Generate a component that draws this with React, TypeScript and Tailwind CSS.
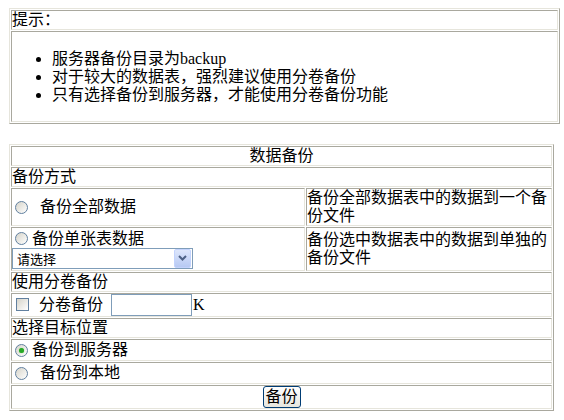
import React from 'react';

const outer =
  'border-separate border-spacing-[1px] border border-t-[#e6e5dc] border-l-[#e6e5dc] border-r-[#a9a89e] border-b-[#a9a89e]';
const cell =
  'p-0 border border-t-[#a9a89e] border-l-[#a9a89e] border-r-[#e6e5dc] border-b-[#e6e5dc]';

function Radio({ checked }: { checked?: boolean }) {
  return (
    <span className="relative inline-block align-middle w-[13px] h-[13px] ml-[3px] mr-[4px] -mt-[2px] rounded-full border border-[#61809f] bg-gradient-to-br from-[#d6d4ca] to-white">
      {checked && (
        <span className="absolute left-[3px] top-[3px] w-[5px] h-[5px] rounded-full bg-[#27a827] shadow-[0_0_1px_#5fd05f]" />
      )}
    </span>
  );
}

function Checkbox() {
  return (
    <span className="inline-block align-middle w-[13px] h-[13px] ml-[4px] mr-[4px] -mt-[2px] border border-[#61809f] bg-gradient-to-br from-[#d6d4ca] to-white" />
  );
}

function SelectBox() {
  return (
    <div className="flex items-center w-[181px] h-[21px] border border-[#7f9db9] bg-white">
      <span className="flex-1 pl-[4px] text-[13px] leading-[19px] font-['Noto_Sans_CJK_SC',sans-serif]">请选择</span>
      <span className="flex items-center justify-center w-[17px] h-[19px] mr-px rounded-[2px] border border-[#c3d3fd] bg-gradient-to-b from-[#dde6fb] to-[#b7c9f3]">
        <svg width="9" height="6" viewBox="0 0 9 6">
          <path d="M1 1 L4.5 4.5 L8 1" fill="none" stroke="#4d6185" strokeWidth="2" />
        </svg>
      </span>
    </div>
  );
}

export default function App() {
  return (
    <div className="min-h-[420px] bg-white pt-[8px] pl-[9px] text-black text-[16px] leading-[18px] font-['Liberation_Serif','Noto_Sans_CJK_SC',serif]">
      <table className={`w-[551px] ${outer}`}>
        <tbody>
          <tr>
            <td className={`${cell} h-[20px]`}>提示：</td>
          </tr>
          <tr>
            <td className={`${cell} h-[91px]`}>
              <ul className="list-disc pl-10 my-[17px]">
                <li>服务器备份目录为backup</li>
                <li>对于较大的数据表，强烈建议使用分卷备份</li>
                <li>只有选择备份到服务器，才能使用分卷备份功能</li>
              </ul>
            </td>
          </tr>
        </tbody>
      </table>

      <table className={`mt-[20px] w-[545px] table-fixed ${outer}`}>
        <colgroup>
          <col className="w-[294px]" />
          <col />
        </colgroup>
        <tbody>
          <tr>
            <td colSpan={2} className={`${cell} h-[20px] text-center`}>数据备份</td>
          </tr>
          <tr>
            <td colSpan={2} className={`${cell} h-[20px]`}>备份方式</td>
          </tr>
          <tr>
            <td className={`${cell} h-[38px]`}>
              <Radio />
              <span className="pl-[8px]">备份全部数据</span>
            </td>
            <td className={cell}>备份全部数据表中的数据到一个备份文件</td>
          </tr>
          <tr>
            <td className={`${cell} h-[44px]`}>
              <div>
                <Radio />
                备份单张表数据
              </div>
              <SelectBox />
            </td>
            <td className={cell}>备份选中数据表中的数据到单独的备份文件</td>
          </tr>
          <tr>
            <td colSpan={2} className={`${cell} h-[20px]`}>使用分卷备份</td>
          </tr>
          <tr>
            <td colSpan={2} className={`${cell} h-[24px]`}>
              <div className="flex items-center">
                <Checkbox />
                <span className="pl-[6px]">分卷备份</span>
                <span className="ml-[8px] w-[81px] h-[22px] border border-[#7f9db9] bg-white" />
                <span className="ml-px">K</span>
              </div>
            </td>
          </tr>
          <tr>
            <td colSpan={2} className={`${cell} h-[20px]`}>选择目标位置</td>
          </tr>
          <tr>
            <td colSpan={2} className={`${cell} h-[22px]`}>
              <Radio checked />
              备份到服务器
            </td>
          </tr>
          <tr>
            <td colSpan={2} className={`${cell} h-[22px]`}>
              <Radio />
              <span className="pl-[8px]">备份到本地</span>
            </td>
          </tr>
          <tr>
            <td colSpan={2} className={`${cell} h-[24px] text-center`}>
              <button className="inline-flex items-center justify-center w-[38px] h-[22px] rounded-[3px] border border-[#003c74] bg-gradient-to-b from-white to-[#e6e5de] text-[16px] leading-[18px] align-middle">
                备份
              </button>
            </td>
          </tr>
        </tbody>
      </table>
    </div>
  );
}
